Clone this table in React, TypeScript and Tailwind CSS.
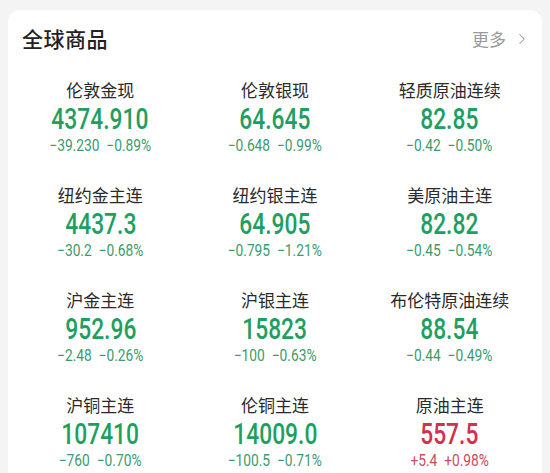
import { ChevronRight } from 'lucide-react';

interface Quote {
  name: string;
  price: string;
  change: string;
  pct: string;
  up?: boolean;
}

const quotes: Quote[] = [
  { name: '伦敦金现', price: '4374.910', change: '−39.230', pct: '−0.89%' },
  { name: '伦敦银现', price: '64.645', change: '−0.648', pct: '−0.99%' },
  { name: '轻质原油连续', price: '82.85', change: '−0.42', pct: '−0.50%' },
  { name: '纽约金主连', price: '4437.3', change: '−30.2', pct: '−0.68%' },
  { name: '纽约银主连', price: '64.905', change: '−0.795', pct: '−1.21%' },
  { name: '美原油主连', price: '82.82', change: '−0.45', pct: '−0.54%' },
  { name: '沪金主连', price: '952.96', change: '−2.48', pct: '−0.26%' },
  { name: '沪银主连', price: '15823', change: '−100', pct: '−0.63%' },
  { name: '布伦特原油连续', price: '88.54', change: '−0.44', pct: '−0.49%' },
  { name: '沪铜主连', price: '107410', change: '−760', pct: '−0.70%' },
  { name: '伦铜主连', price: '14009.0', change: '−100.5', pct: '−0.71%' },
  { name: '原油主连', price: '557.5', change: '+5.4', pct: '+0.98%', up: true },
];

export default function App() {
  return (
    <div className="w-[550px] h-[473px] overflow-hidden bg-[#f4f4f4] pt-[10px] pl-[8px] pr-[8px] font-['Roboto','Noto_Sans_CJK_SC',sans-serif]">
      <div className="h-full bg-white rounded-t-[12px]">
        <div className="h-[58px] flex items-center justify-between pl-[14px] pr-[11px]">
          <h1 className="text-[21px] font-medium text-[#222] font-['Noto_Sans_CJK_SC',sans-serif] tracking-[0.5px]">全球商品</h1>
          <div className="flex items-center gap-[7px] text-[#9a9a9a] text-[17px] font-['Noto_Sans_CJK_SC',sans-serif]">
            <span>更多</span>
            <ChevronRight className="w-[18px] h-[18px]" strokeWidth={1.4} />
          </div>
        </div>

        <div className="grid grid-cols-3 px-[5px]">
          {quotes.map((q) => (
            <div key={q.name} className="h-[105px] pt-[13px] flex flex-col items-center">
              <div className="h-[18px] leading-[18px] text-[17px] text-[#2a2a2a] font-['Noto_Sans_CJK_SC',sans-serif]">{q.name}</div>
              <div className={`mt-[5px] h-[30px] leading-[30px] text-[30px] font-medium scale-x-[0.76] ${q.up ? 'text-[#d5304b]' : 'text-[#1f9f5f]'}`}>
                {q.price}
              </div>
              <div className={`mt-[3px] leading-[18px] text-[16px] flex gap-[8px] scale-x-[0.86] ${q.up ? 'text-[#cc4a5c]' : 'text-[#3b9b6c]'}`}>
                <span>{q.change}</span>
                <span>{q.pct}</span>
              </div>
            </div>
          ))}
        </div>
      </div>
    </div>
  );
}
